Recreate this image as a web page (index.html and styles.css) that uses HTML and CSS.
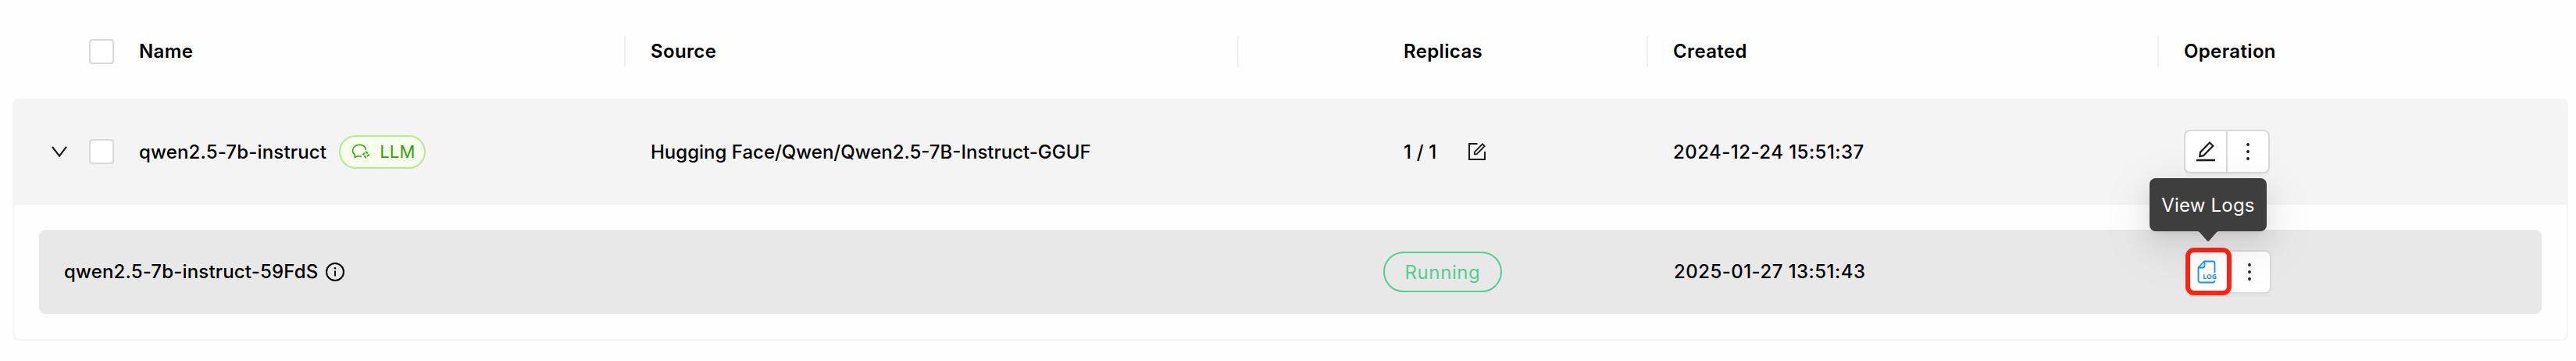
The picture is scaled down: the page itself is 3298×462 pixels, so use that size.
FILE: index.html
```html
<!DOCTYPE html>
<html lang="en">
<head>
<meta charset="utf-8">
<title>Models</title>
<link rel="stylesheet" href="styles.css">
</head>
<body>
<main class="table">
  <div class="grid head">
    <div class="cell select"><span class="checkbox"></span></div>
    <div class="cell name"><span>Name</span></div>
    <div class="cell source"><span>Source</span></div>
    <div class="cell replicas"><span>Replicas</span></div>
    <div class="cell created"><span>Created</span></div>
    <div class="cell operation"><span>Operation</span></div>
  </div>
  <section class="card">
    <div class="grid row">
      <div class="cell select">
        <svg class="chevron" viewBox="0 0 20 14"><path d="M1 .8 10 12.6 19 .8" fill="none" stroke="#1c1c1c" stroke-width="2.2"/></svg>
        <span class="checkbox"></span>
      </div>
      <div class="cell name"><span class="label">qwen2.5-7b-instruct</span>
        <span class="tag">
          <svg class="chat" viewBox="0 0 24 20"><g fill="none" stroke="#389e0d" stroke-width="1.5"><path d="M18.500 8C18.500 4.200 15 1.200 10.300 1.200 5.500 1.200 1.500 4.400 1.500 8.600c0 2.400 1.100 4.400 2.800 5.600v3.200l3.200-1.400h5.500"/><path d="m18.500 10.200 3.700 3.700-3.700 3.700-3.700-3.700z" stroke-dasharray="3.200 2" stroke-width="2"/></g></svg>
          <span>LLM</span>
        </span>
      </div>
      <div class="cell source"><span class="label">Hugging Face/Qwen/Qwen2.5-7B-Instruct-GGUF</span></div>
      <div class="cell replicas"><span class="label count">1 / 1</span>
        <svg class="edit" viewBox="0 0 24 24"><g fill="none" stroke="#1c1c1c" stroke-width="2"><path d="M12.500 2H2v20h20V12"/><path d="m8.800 12.600 10.200-10.300 2.700 2.700-10.200 10.300H8.800z" stroke-width="1.800"/></g></svg>
      </div>
      <div class="cell created"><span class="label">2024-12-24 15:51:37</span></div>
      <div class="cell operation">
        <div class="buttons">
          <span class="button"><svg class="pen" viewBox="0 0 26 26"><path d="M5.300 19.200 6 13.800 18 1.500l4.300 4.200L10 18.200z" fill="none" stroke="#1c1c1c" stroke-width="2.200"/><path d="M1 24h24" stroke="#1c1c1c" stroke-width="2.600"/></svg></span>
          <span class="button more"><svg class="dots" viewBox="0 0 4 22"><circle cx="2" cy="2" r="1.900"/><circle cx="2" cy="11" r="1.900"/><circle cx="2" cy="20" r="1.900"/></svg></span>
        </div>
      </div>
    </div>
    <div class="grid instance">
      <div class="cell name"><span>qwen2.5-7b-instruct-59FdS</span>
        <svg class="info" viewBox="0 0 24 24"><circle cx="12" cy="12" r="11" fill="none" stroke="#000" stroke-width="2"/><path d="M12 10.500v7" stroke="#000" stroke-width="1.800"/><circle cx="12" cy="7.300" r="1.200"/></svg>
      </div>
      <div class="cell replicas"><span class="status">Running</span></div>
      <div class="cell created"><span>2025-01-27 13:51:43</span></div>
      <div class="cell operation">
        <div class="buttons">
          <span class="button"><svg class="log" viewBox="0 0 26 30"><g fill="none" stroke="#1890ff" stroke-width="1.800"><path d="M22.500 16V4a2.500 2.500 0 0 0-2.500-2.500H9L1.500 9.500V26A2.500 2.500 0 0 0 4 28.500h16a2.500 2.500 0 0 0 2.500-2.500"/><path d="M9.500 1.500V7A2.500 2.500 0 0 1 7 9.500H1.500"/></g><text x="7.300" y="23.800" textLength="17.500" lengthAdjust="spacingAndGlyphs">LOG</text></svg></span>
          <span class="button more"><svg class="dots" viewBox="0 0 4 22"><circle cx="2" cy="2" r="1.900"/><circle cx="2" cy="11" r="1.900"/><circle cx="2" cy="20" r="1.900"/></svg></span>
          <span class="highlight"></span>
          <span class="tooltip">View Logs</span>
        </div>
      </div>
    </div>
  </section>
</main>
</body>
</html>
```
FILE: styles.css
```css
* { box-sizing: border-box; }
body {
  margin: 0;
  background: #fefefe;
  color: #000;
  font: 450 24px/36px Inter, sans-serif;
  letter-spacing: 0.17px;
}
svg { display: block; flex: none; }
.table { width: 3298px; height: 462px; padding: 0 10px 0 16px; overflow: hidden; }
.grid { display: grid; grid-template-columns: 130px 655px 785px 524px 654px 1fr; }
.cell { display: flex; align-items: center; padding-left: 32px; white-space: nowrap; }
.head { height: 126px; align-items: center; font-weight: 600; letter-spacing: 0.35px; }
.head .cell { height: 40px; margin-top: 6px; }
.head .name, .head .source, .head .replicas, .head .created { border-right: 2px solid #f0f0f0; }
.grid .select { padding-left: 98px; }
.cell.replicas { padding-left: 211px; }
.checkbox { width: 32px; height: 32px; flex: none; background: #fff; border: 2px solid #d9d9d9; border-radius: 4px; }
.card { height: 310px; border: 2px solid #f4f4f4; border-radius: 8px; }
.row { height: 136px; margin: -2px; background: #f4f4f4; border-radius: 8px 8px 0 0; }
.row .select { padding-left: 50px; }
.label { padding-top: 1px; }
.row .source { letter-spacing: 0; }
.chevron { width: 20px; height: 14px; margin-right: 28px; }
.tag {
  display: flex; align-items: center;
  width: 111px; height: 43px; margin-left: 16px; padding-left: 14px; gap: 12px;
  background: #f6ffed; border: 2px solid #b7eb8f; border-radius: 22px;
  color: #389e0d; font-size: 22px; font-weight: 400;
}
.chat { width: 24px; height: 20px; }
.count { width: 48px; }
.edit { width: 24px; height: 24px; margin-left: 34px; }
.row .created, .instance .created { letter-spacing: 0.45px; }
.instance {
  grid-template-columns: 1536px 525px 655px 1fr;
  height: 108px; margin: 34px 32px 0; background: #e8e8e8; border-radius: 8px;
}
.instance .replicas { padding-left: 185px; }
.info { width: 24px; height: 24px; margin-left: 10px; }
.status {
  width: 152px; height: 52px; border: 2px solid #54cc98; border-radius: 26px;
  color: #54cc98; font-weight: 400; line-height: 49px; text-align: center; letter-spacing: 0.6px;
}
.buttons { position: relative; display: flex; width: 110px; height: 56px; background: #fff; border: 2px solid #d9d9d9; border-radius: 8px; box-shadow: 0 4px 0 rgba(0, 0, 0, .02); }
.button { display: flex; flex: 1; align-items: center; justify-content: center; }
.more { border-left: 2px solid #d9d9d9; }
.pen { width: 26px; height: 26px; }
.dots { width: 4px; height: 22px; fill: #1c1c1c; }
.log { width: 26px; height: 30px; }
.log text { font: 700 9.500px "Noto Sans", sans-serif; fill: #1890ff; letter-spacing: 0; }
.highlight { position: absolute; left: -2px; top: -5px; width: 59px; height: 61px; border: 6px solid #ff2414; border-radius: 11px; }
.tooltip {
  position: absolute; left: -48px; top: -94px; width: 150px; height: 68px;
  background: #3e3e3e; border-radius: 8px; color: #fff; font-weight: 400;
  line-height: 70px; text-align: center; letter-spacing: 0.2px;
  box-shadow: 0 12px 32px rgba(0, 0, 0, .08), 0 6px 12px -8px rgba(0, 0, 0, .12), 0 18px 56px 16px rgba(0, 0, 0, .05);
}
.tooltip::after {
  content: ""; position: absolute; left: 60px; top: 67px; width: 30px; height: 14px;
  background: #3e3e3e; clip-path: polygon(0 0, 100% 0, 86% 16%, 55% 93%, 50% 100%, 45% 93%, 14% 16%);
}
```
